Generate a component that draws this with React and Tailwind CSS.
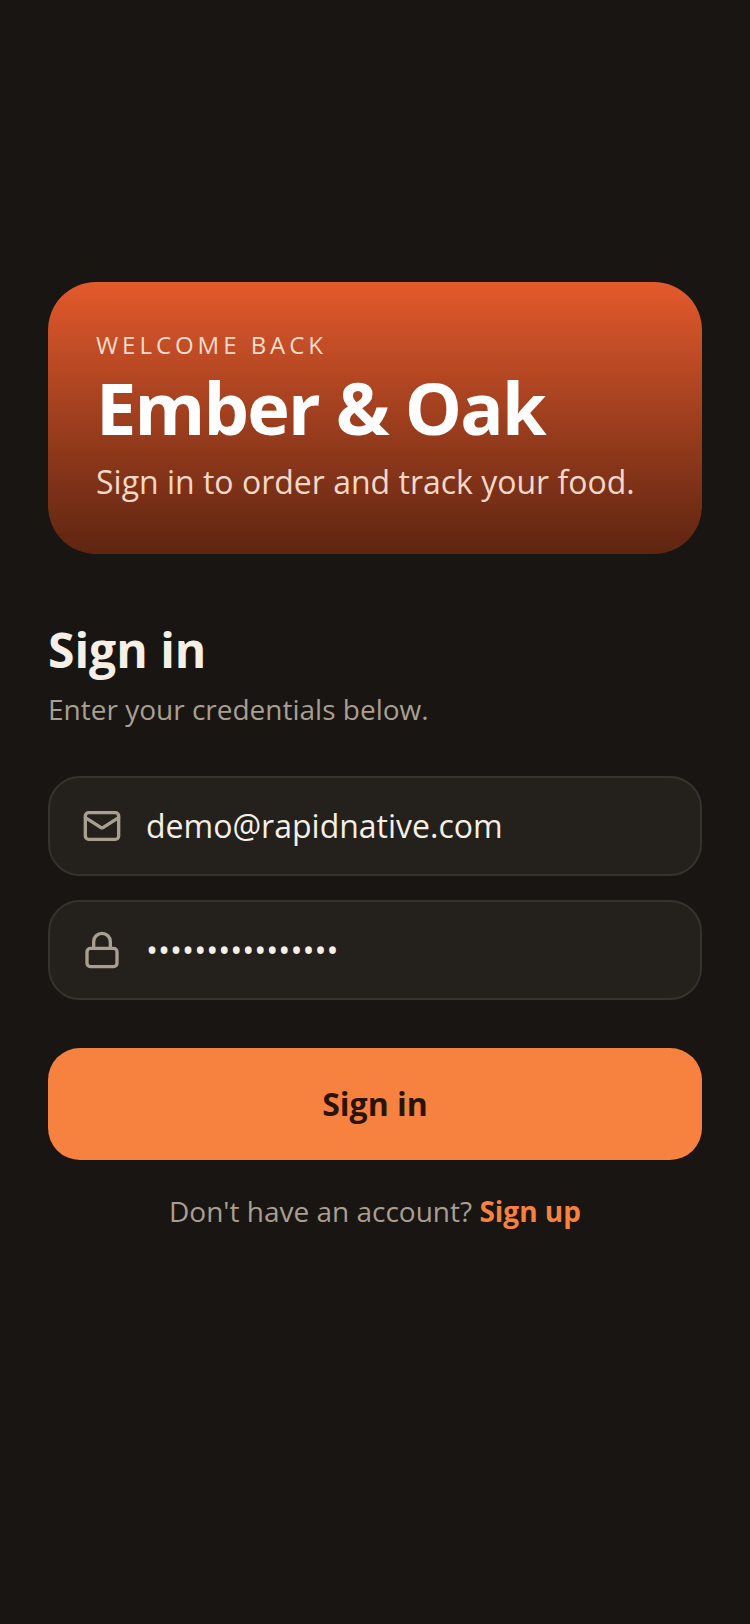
import { Mail, Lock } from "lucide-react"

const App = () => {
  return (
    <div className="min-h-[1624px] bg-[#181513] px-12 pt-[282px] font-['Open_Sans',sans-serif]">
      <div className="h-[272px] rounded-[48px] bg-gradient-to-b from-[#e45a2c] to-[#5f2511] p-12">
        <p className="text-[24px] leading-[30px] tracking-[3.96px] text-[#f8dccb]">WELCOME BACK</p>
        <h1 className="mt-[5px] text-[72px] leading-[84px] font-bold tracking-[-1.8px] text-white">Ember &amp; Oak</h1>
        <p className="mt-[13px] text-[32px] leading-10 text-[#f3d8c8]">Sign in to order and track your food.</p>
      </div>

      <h2 className="mt-[68px] text-[48px] leading-[56px] font-bold text-[#f5efe6]">Sign in</h2>
      <p className="mt-[13px] text-[28px] leading-9 text-[#a99f90]">Enter your credentials below.</p>

      <div className="mt-[49px] flex flex-col gap-6">
        <div className="flex h-[100px] items-center gap-6 rounded-[32px] border-2 border-[#36322d] bg-[#24211d] px-8">
          <Mail size={40} strokeWidth={2} className="text-[#a99f90]" />
          <span className="text-[32px] text-[#f5efe6]">demo@rapidnative.com</span>
        </div>
        <div className="flex h-[100px] items-center gap-6 rounded-[32px] border-2 border-[#36322d] bg-[#24211d] px-8">
          <Lock size={40} strokeWidth={2} className="text-[#a99f90]" />
          <span className="text-[32px] text-[#f5efe6]">••••••••••••••••</span>
        </div>
      </div>

      <button className="mt-12 h-28 w-full rounded-[32px] bg-[#f7823f] text-[32px] font-bold text-[#2a140a]">Sign in</button>

      <p className="mt-[33px] text-center text-[28px] leading-9 text-[#a99f90]">
        Don't have an account? <span className="font-bold text-[#f7823f]">Sign up</span>
      </p>
    </div>
  )
}

export default App
